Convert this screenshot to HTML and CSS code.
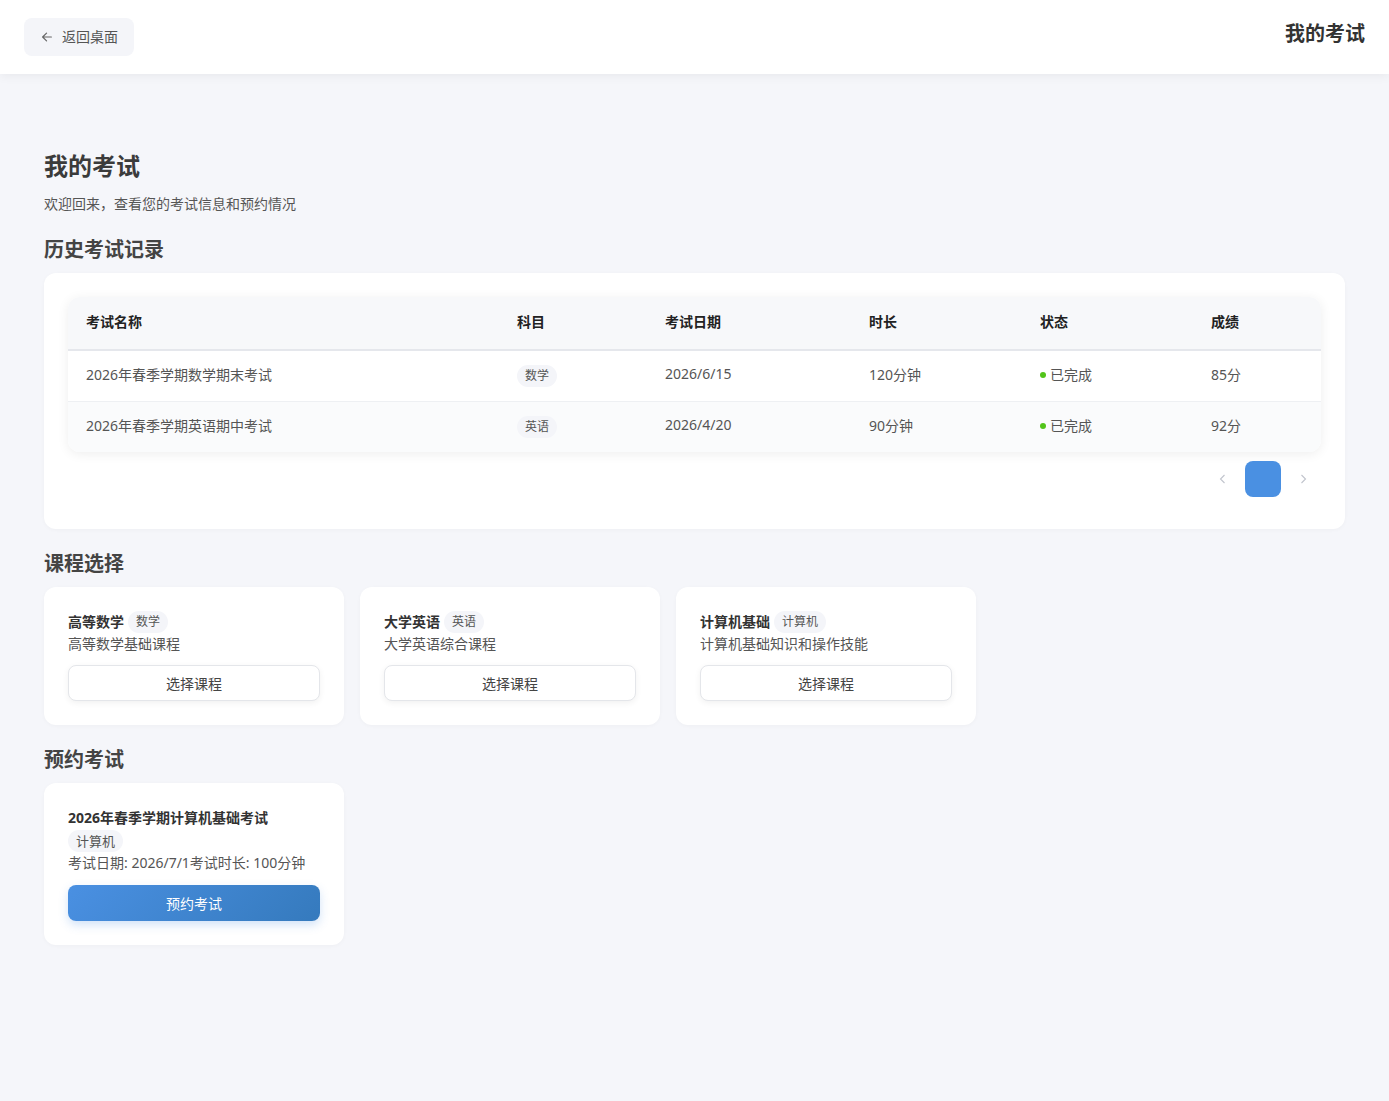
FILE: index.html
```html
<!DOCTYPE html>
<html lang="zh-CN">
<head>
<meta charset="utf-8">
<title>我的考试</title>
<link rel="stylesheet" href="styles.css">
</head>
<body>
<header class="topbar">
  <button class="back-btn">
    <svg class="back-icon" viewBox="0 0 16 16" width="14" height="14"><path d="M13 8H3M7.5 3.5L3 8l4.5 4.5" fill="none" stroke="currentColor" stroke-width="1.4" stroke-linecap="round" stroke-linejoin="round"/></svg>
    <span>返回桌面</span>
  </button>
  <div class="topbar-title">我的考试</div>
</header>

<main class="main">
  <h1 class="page-title">我的考试</h1>
  <p class="page-sub">欢迎回来，查看您的考试信息和预约情况</p>

  <h2 class="section-title">历史考试记录</h2>
  <section class="card history-card">
    <div class="table-wrap">
      <table class="exam-table">
        <colgroup>
          <col class="c-name"><col class="c-subj"><col class="c-date"><col class="c-dur"><col class="c-status"><col class="c-score">
        </colgroup>
        <thead>
          <tr><th>考试名称</th><th>科目</th><th>考试日期</th><th>时长</th><th>状态</th><th>成绩</th></tr>
        </thead>
        <tbody>
          <tr>
            <td>2026年春季学期数学期末考试</td>
            <td><span class="tag">数学</span></td>
            <td>2026/6/15</td>
            <td>120分钟</td>
            <td><span class="dot"></span>已完成</td>
            <td>85分</td>
          </tr>
          <tr class="striped">
            <td>2026年春季学期英语期中考试</td>
            <td><span class="tag">英语</span></td>
            <td>2026/4/20</td>
            <td>90分钟</td>
            <td><span class="dot"></span>已完成</td>
            <td>92分</td>
          </tr>
        </tbody>
      </table>
    </div>
    <div class="pager">
      <span class="pager-arrow"><svg viewBox="0 0 12 12" width="12" height="12"><path d="M7.5 2L3.5 6l4 4" fill="none" stroke="currentColor" stroke-width="1.1"/></svg></span>
      <span class="pager-page"></span>
      <span class="pager-arrow"><svg viewBox="0 0 12 12" width="12" height="12"><path d="M4.5 2l4 4-4 4" fill="none" stroke="currentColor" stroke-width="1.1"/></svg></span>
    </div>
  </section>

  <h2 class="section-title">课程选择</h2>
  <section class="course-grid">
    <div class="card small-card">
      <div class="course-head"><span class="course-name">高等数学</span><span class="tag">数学</span></div>
      <div class="course-desc">高等数学基础课程</div>
      <button class="outline-btn">选择课程</button>
    </div>
    <div class="card small-card">
      <div class="course-head"><span class="course-name">大学英语</span><span class="tag">英语</span></div>
      <div class="course-desc">大学英语综合课程</div>
      <button class="outline-btn">选择课程</button>
    </div>
    <div class="card small-card">
      <div class="course-head"><span class="course-name">计算机基础</span><span class="tag">计算机</span></div>
      <div class="course-desc">计算机基础知识和操作技能</div>
      <button class="outline-btn">选择课程</button>
    </div>
  </section>

  <h2 class="section-title">预约考试</h2>
  <section class="course-grid">
    <div class="card small-card">
      <div class="exam-name">2026年春季学期计算机基础考试</div>
      <div class="exam-tag-row"><span class="tag tag-block">计算机</span></div>
      <div class="exam-info">考试日期: 2026/7/1考试时长: 100分钟</div>
      <button class="primary-btn">预约考试</button>
    </div>
  </section>
</main>
</body>
</html>
```

FILE: styles.css
```css
* { box-sizing: border-box; }

html, body {
  margin: 0;
  padding: 0;
}

body {
  font-family: "Noto Sans", "Noto Sans CJK SC", sans-serif;
  font-size: 14px;
  color: #333;
  background: #f5f6fa;
  min-height: 1101px;
}

.topbar {
  height: 74px;
  background: #fff;
  display: flex;
  align-items: center;
  justify-content: space-between;
  padding: 0 24px;
  box-shadow: 0 2px 10px rgba(0, 0, 0, 0.06);
  position: relative;
  z-index: 2;
}

.back-btn {
  height: 38px;
  display: flex;
  align-items: center;
  gap: 8px;
  padding: 0 16px 2px;
  border: none;
  border-radius: 8px;
  background: #f4f5f9;
  color: #555;
  font-family: inherit;
  font-size: 14px;
}

.back-icon { color: #666; margin-top: 2px; }

.topbar-title {
  font-size: 20px;
  line-height: 30px;
  font-weight: 700;
  color: #333;
  margin-bottom: 6px;
}

.main {
  padding: 74px 44px 40px;
}

.page-title {
  margin: 0;
  font-size: 24px;
  line-height: 36px;
  font-weight: 700;
  color: #3b3b3b;
}

.page-sub {
  margin: 9px 0 0;
  padding-bottom: 1px;
  font-size: 14px;
  line-height: 21px;
  color: #555;
}

.section-title {
  margin: 20px 0 8px;
  font-size: 20px;
  line-height: 30px;
  font-weight: 700;
  color: #444;
}

.card {
  background: #fff;
  border-radius: 12px;
  box-shadow: 0 1px 4px rgba(0, 0, 0, 0.03);
}

.history-card {
  padding: 24px 24px 32px;
}

.table-wrap {
  border-radius: 12px;
  overflow: hidden;
  box-shadow: 0 2px 12px rgba(0, 0, 0, 0.07);
}

.exam-table {
  width: 100%;
  border-collapse: collapse;
  table-layout: fixed;
}

.c-name { width: 431px; }
.c-subj { width: 148px; }
.c-date { width: 204px; }
.c-dur { width: 171px; }
.c-status { width: 171px; }
.c-score { width: 128px; }

.exam-table th {
  text-align: left;
  height: 53px;
  padding: 0 18px 4px;
  background: #f7f8fa;
  border-bottom: 2px solid #e5e7ec;
  font-weight: 700;
  font-size: 14px;
  color: #222;
}

.exam-table td {
  height: 51px;
  padding: 0 18px 4px;
  color: #555;
  font-size: 14px;
  border-bottom: 1px solid #eef0f3;
}

.exam-table tbody tr:last-child td { border-bottom: none; height: 51px; }

.exam-table tr.striped td { background: #fafbfc; }

.tag {
  display: inline-block;
  height: 22px;
  line-height: 22px;
  padding: 0 8px;
  border-radius: 11px;
  background: #f4f5f9;
  font-size: 12px;
  color: #555;
  vertical-align: middle;
}

.exam-table .tag { position: relative; top: 2px; }

.dot {
  display: inline-block;
  width: 6px;
  height: 6px;
  border-radius: 50%;
  background: #52c41a;
  margin-right: 4px;
  vertical-align: middle;
  position: relative;
  top: -1px;
}

.pager {
  display: flex;
  justify-content: flex-end;
  align-items: center;
  gap: 8px;
  margin-top: 9px;
  padding-right: 4px;
}

.pager-arrow {
  width: 28px;
  height: 32px;
  display: flex;
  align-items: center;
  justify-content: center;
  color: #c0c4cc;
}

.pager-page {
  width: 36px;
  height: 36px;
  border-radius: 8px;
  background: #4a90e2;
}

.course-grid {
  display: grid;
  grid-template-columns: repeat(3, 300px);
  gap: 16px;
}

.small-card {
  padding: 24px;
}

.course-head {
  display: flex;
  align-items: center;
  gap: 4px;
  height: 22px;
}

.course-name {
  font-weight: 700;
  color: #333;
  position: relative;
  top: -1px;
}

.course-desc {
  line-height: 22px;
  color: #555;
}

.outline-btn {
  display: block;
  width: 100%;
  height: 36px;
  margin-top: 10px;
  padding-bottom: 2px;
  background: #fff;
  border: 1px solid #e4e6ea;
  border-radius: 8px;
  box-shadow: 0 2px 6px rgba(0, 0, 0, 0.06);
  font-family: inherit;
  font-size: 14px;
  color: #444;
}

.exam-name {
  font-weight: 700;
  line-height: 22px;
  color: #333;
}

.exam-tag-row { margin-top: 1px; height: 22px; }

.tag-block { font-size: 13px; vertical-align: top; }

.exam-info {
  line-height: 22px;
  color: #555;
}

.primary-btn {
  display: block;
  width: 100%;
  height: 36px;
  margin-top: 11px;
  padding-bottom: 2px;
  border: none;
  border-radius: 8px;
  background: linear-gradient(135deg, #4a90e2, #357abd);
  box-shadow: 0 4px 10px rgba(74, 144, 226, 0.25);
  color: #fff;
  font-family: inherit;
  font-size: 14px;
}
```
